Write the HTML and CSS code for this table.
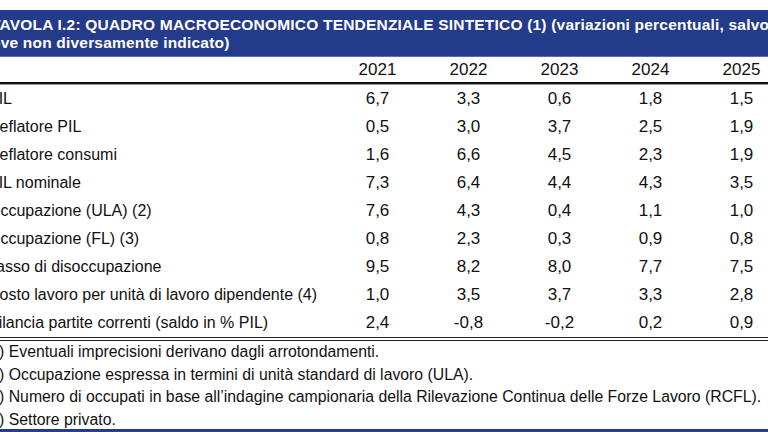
FILE: index.html
```html
<!DOCTYPE html>
<html lang="it">
<head>
<meta charset="utf-8">
<title>Tavola I.2</title>
<link rel="stylesheet" href="styles.css">
</head>
<body>
<div class="page">
  <div class="title">TAVOLA I.2: QUADRO MACROECONOMICO TENDENZIALE SINTETICO (1) (variazioni percentuali, salvo<br>ove non diversamente indicato)</div>
  <div class="table">
    <div class="row head">
      <div class="label"></div>
      <div class="num">2021</div><div class="num">2022</div><div class="num">2023</div><div class="num">2024</div><div class="num">2025</div>
    </div>
    <div class="body">
      <div class="row"><div class="label">PIL</div><div class="num">6,7</div><div class="num">3,3</div><div class="num">0,6</div><div class="num">1,8</div><div class="num">1,5</div></div>
      <div class="row"><div class="label">Deflatore PIL</div><div class="num">0,5</div><div class="num">3,0</div><div class="num">3,7</div><div class="num">2,5</div><div class="num">1,9</div></div>
      <div class="row"><div class="label">Deflatore consumi</div><div class="num">1,6</div><div class="num">6,6</div><div class="num">4,5</div><div class="num">2,3</div><div class="num">1,9</div></div>
      <div class="row"><div class="label">PIL nominale</div><div class="num">7,3</div><div class="num">6,4</div><div class="num">4,4</div><div class="num">4,3</div><div class="num">3,5</div></div>
      <div class="row"><div class="label">Occupazione (ULA) (2)</div><div class="num">7,6</div><div class="num">4,3</div><div class="num">0,4</div><div class="num">1,1</div><div class="num">1,0</div></div>
      <div class="row"><div class="label">Occupazione (FL) (3)</div><div class="num">0,8</div><div class="num">2,3</div><div class="num">0,3</div><div class="num">0,9</div><div class="num">0,8</div></div>
      <div class="row"><div class="label">Tasso di disoccupazione</div><div class="num">9,5</div><div class="num">8,2</div><div class="num">8,0</div><div class="num">7,7</div><div class="num">7,5</div></div>
      <div class="row"><div class="label">Costo lavoro per unità di lavoro dipendente (4)</div><div class="num">1,0</div><div class="num">3,5</div><div class="num">3,7</div><div class="num">3,3</div><div class="num">2,8</div></div>
      <div class="row"><div class="label">Bilancia partite correnti (saldo in % PIL)</div><div class="num">2,4</div><div class="num">-0,8</div><div class="num">-0,2</div><div class="num">0,2</div><div class="num">0,9</div></div>
    </div>
  </div>
  <div class="notes">
    <p>(1) Eventuali imprecisioni derivano dagli arrotondamenti.</p>
    <p>(2) Occupazione espressa in termini di unità standard di lavoro (ULA).</p>
    <p>(3) Numero di occupati in base all’indagine campionaria della Rilevazione Continua delle Forze Lavoro (RCFL).</p>
    <p>(4) Settore privato.</p>
  </div>
</div>
</body>
</html>
```

FILE: styles.css
```css
html, body {
  margin: 0;
  padding: 0;
  background: #ffffff;
  overflow: hidden;
}
body {
  font-family: "Liberation Sans", Arial, sans-serif;
  color: #111111;
}
.page {
  width: 800px;
  margin-left: -12px;
  padding-top: 10px;
}
.title {
  background: #243a8b;
  color: #ffffff;
  font-weight: bold;
  font-size: 15.5px;
  letter-spacing: 0.2px;
  line-height: 17.5px;
  padding: 6px 0 5px 3px;
  border-bottom: 1px solid #5a6bb0;
  height: 35px;
  overflow: hidden;
  white-space: nowrap;
}
.row {
  display: grid;
  grid-template-columns: 344px repeat(5, 91px);
  align-items: center;
  height: 28px;
}
.row.head {
  height: 24px;
  padding-top: 1px;
  border-bottom: 2px solid #111111;
  box-shadow: 0 1px 0 #9a9a9a;
}
.label {
  font-size: 16px;
  white-space: nowrap;
}
.num {
  font-size: 17px;
  text-align: center;
}
.body {
  border-bottom: 4px double #222222;
  padding-top: 1px;
}
.notes {
  font-size: 15.8px;
  line-height: 22.5px;
  border-bottom: 4px solid #2b3f90;
  box-shadow: inset 0 -2px 0 #243a8b;
}
.notes p {
  margin: 0 0 0 -3px;
  white-space: nowrap;
}
```
